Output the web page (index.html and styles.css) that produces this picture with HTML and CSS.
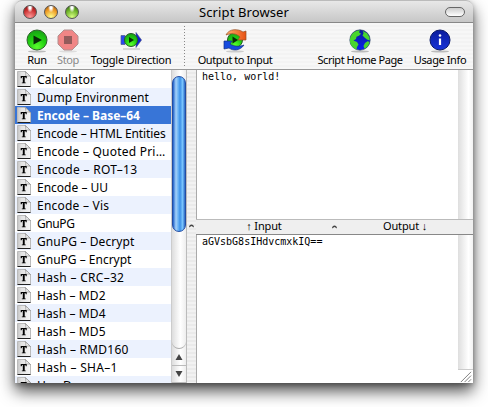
FILE: index.html
```html
<!DOCTYPE html>
<html lang="en">
<head>
<meta charset="utf-8">
<title>Script Browser</title>
<link rel="stylesheet" href="styles.css">
</head>
<body>
<svg class="defs" width="0" height="0">
  <defs>
    <linearGradient id="page" x1="0" y1="0" x2="1" y2="0"><stop offset="0" stop-color="#c4c4c4"/><stop offset=".3" stop-color="#e2e2e2"/><stop offset="1" stop-color="#f5f5f5"/></linearGradient>
    <radialGradient id="green" cx=".5" cy=".85" r=".8"><stop offset="0" stop-color="#5cff2e"/><stop offset=".55" stop-color="#20d010"/><stop offset="1" stop-color="#19a516"/></radialGradient>
    <linearGradient id="navy" x1="0" y1="0" x2="0" y2="1"><stop offset="0" stop-color="#0a1c9c"/><stop offset="1" stop-color="#1733d8"/></linearGradient>
    <linearGradient id="sea" x1="0" y1="0" x2="0" y2="1"><stop offset="0" stop-color="#0c1a9a"/><stop offset="1" stop-color="#0a22f0"/></linearGradient>
    <linearGradient id="orange" x1="0" y1="0" x2="1" y2="0"><stop offset="0" stop-color="#ffb070"/><stop offset="1" stop-color="#e85010"/></linearGradient>
    <symbol id="doc" viewBox="0 0 14 16">
      <path d="M.5.5h8l5 5v10H.5z" fill="url(#page)" stroke="#bbb"/>
      <path d="M8 .5c1.200 1.500 1 3.500.5 5 1.500-.8 3.500-.8 5 0z" fill="#fff" stroke="#888" stroke-width=".7"/>
      <path d="M.5 15.500h13" stroke="#222"/>
      <path d="M3.700 5h6v2.300h-.9L8.300 6h-.6v5.400l1 .2v.7H4.800v-.7l1-.2V6h-.6l-.6 1.300h-.9z" fill="#000"/>
    </symbol>
  </defs>
</svg>
<main class="window">
  <header class="titlebar">
    <div class="lights"><i class="light red"></i><i class="light amber"></i><i class="light lime"></i></div>
    <h1>Script Browser</h1>
    <i class="pill"></i>
  </header>
  <nav class="toolbar">
    <div class="tool run"><svg viewBox="0 0 24 24"><ellipse cx="12" cy="22.500" rx="9" ry="1" fill="#bbb"/><circle cx="12" cy="11" r="10" fill="url(#green)" stroke="#30622c"/><path d="M8.500 6.500l8.500 4.500-8.500 4.500z" fill="#092b08"/></svg><span>Run</span></div>
    <div class="tool stop"><svg viewBox="0 0 24 24"><ellipse cx="12" cy="22.500" rx="9" ry="1" fill="#ddd"/><path d="M8 1h8l6 6v8l-6 6H8l-6-6V7z" fill="#f08585" stroke="#b09090"/><path d="M8 7h8v8H8z" fill="#935b5b"/></svg><span>Stop</span></div>
    <div class="tool toggle"><svg viewBox="0 0 24 24"><path d="M4 20h17" stroke="#ccc" stroke-width="1.500"/><path d="M2 6.500h4v9H2z" fill="#2a48ee" stroke="#4e5a8c" stroke-width=".7"/><path d="M17 3.500l5.500 7.500-5.500 7.500z" fill="#1020d0" stroke="#4e5a8c" stroke-width=".7"/><circle cx="12" cy="11" r="6.500" fill="url(#green)" stroke="#285a28"/><path d="M10 8l5 3-5 3z" fill="#092b08"/></svg><span>Toggle Direction</span></div>
    <i class="rule"></i>
    <div class="tool output"><svg viewBox="0 0 24 24"><ellipse cx="12" cy="22.500" rx="9" ry="1" fill="#ccc"/><circle cx="12" cy="11" r="7.500" fill="url(#green)" stroke="#285a28"/><path d="M3 6C6-.5 15-.5 20 3l3-1v9h-8l2-3C13 4 8 4 3 6z" fill="url(#orange)" stroke="#975024" stroke-width=".7"/><path d="M21 16c-4 6-11 6-15 3l-5 1v-8h8l-2 3c4 2.500 9 3 14 1z" fill="#164bdf" stroke="#163080" stroke-width=".7"/><path d="M9.500 7.500l5.500 3.500-5.500 3.500z" fill="#092b08"/></svg><span>Output to Input</span></div>
    <div class="tool home"><svg viewBox="0 0 24 24"><ellipse cx="12" cy="22.500" rx="9" ry="1" fill="#bbb"/><circle cx="12" cy="11" r="10.200" fill="url(#sea)" stroke="#223a55" stroke-width=".6"/><path d="M2.200 9C3.500 4 8 1.200 12 1.300l-1 2 2 1.500-2 2-2.500 1L8 10l-2.500 1.500L9 13l1.500 2.500L9 18l-.5 2.500C3.500 18.500 1 14 2.200 9zM15 2l4 2.300 2.300 3.700.5 3.500-2.800-1-2.500-2-2-2 1-2zM17 14l3-2 1.500 1.500c-.8 3-2.500 5-5 6.200L15.500 17z" fill="#48d52e"/></svg><span>Script Home Page</span></div>
    <div class="tool usage"><svg viewBox="0 0 24 24"><ellipse cx="12" cy="22.500" rx="9" ry="1" fill="#bbb"/><circle cx="12" cy="11" r="10" fill="url(#navy)" stroke="#0a1968"/><circle cx="12" cy="6.500" r="1.300" fill="#fff"/><path d="M12 9.500v6.500" stroke="#fff" stroke-width="2.200"/></svg><span>Usage Info</span></div>
  </nav>
  <section class="content">
    <ul class="scripts">
      <li><svg><use href="#doc"/></svg><span class="loose">Calculator</span></li>
      <li><svg><use href="#doc"/></svg><span class="loose">Dump Environment</span></li>
      <li class="selected"><svg><use href="#doc"/></svg><span>Encode – Base–64</span></li>
      <li><svg><use href="#doc"/></svg><span class="tight">Encode – HTML Entities</span></li>
      <li><svg><use href="#doc"/></svg><span class="wide">Encode – Quoted Pri…</span></li>
      <li><svg><use href="#doc"/></svg><span class="wider">Encode – ROT–13</span></li>
      <li><svg><use href="#doc"/></svg><span>Encode – UU</span></li>
      <li><svg><use href="#doc"/></svg><span class="wide">Encode – Vis</span></li>
      <li><svg><use href="#doc"/></svg><span class="tighter">GnuPG</span></li>
      <li><svg><use href="#doc"/></svg><span class="loose">GnuPG – Decrypt</span></li>
      <li><svg><use href="#doc"/></svg><span>GnuPG – Encrypt</span></li>
      <li><svg><use href="#doc"/></svg><span class="wider">Hash – CRC–32</span></li>
      <li><svg><use href="#doc"/></svg><span class="loose">Hash – MD2</span></li>
      <li><svg><use href="#doc"/></svg><span class="loose">Hash – MD4</span></li>
      <li><svg><use href="#doc"/></svg><span class="loose">Hash – MD5</span></li>
      <li><svg><use href="#doc"/></svg><span class="wide">Hash – RMD160</span></li>
      <li><svg><use href="#doc"/></svg><span class="wider">Hash – SHA–1</span></li>
      <li><svg><use href="#doc"/></svg><span class="wider">Hex Dump</span></li>
    </ul>
    <div class="scrollbar">
      <div class="track"><div class="thumb"></div></div>
      <div class="step"><svg viewBox="0 0 8 6"><path d="M4 0l3.500 6h-7z"/></svg></div>
      <div class="step"><svg viewBox="0 0 8 6"><path d="M4 6L.5 0h7z"/></svg></div>
    </div>
    <div class="splitter"><svg viewBox="0 0 5 4"><path d="M0 3.500C0-.5 5-.5 5 3.500L2.500 2z"/></svg></div>
    <div class="panes">
      <div class="pane"><pre>hello, world!</pre><i class="gutter"></i></div>
      <div class="divider"><span>↑ Input</span><svg viewBox="0 0 5 4"><path d="M0 3.500C0-.5 5-.5 5 3.500L2.500 2z"/></svg><span>Output ↓</span></div>
      <div class="pane"><pre>aGVsbG8sIHdvcmxkIQ==</pre><i class="gutter last"><svg class="grip" viewBox="0 0 14 14"><path d="M2 13L13 2M6 13l7-7M10 13l3-3" stroke="#777" fill="none"/></svg></i></div>
    </div>
  </section>
</main>
</body>
</html>
```

FILE: styles.css
```css
* { box-sizing: border-box; }
body { margin: 0; height: 407px; overflow: hidden; background: #fff; font-family: "Noto Sans", sans-serif; color: #000; }
.defs { display: block; height: 0; }
svg { display: block; flex: none; }
.window { width: 458px; height: 383px; margin-left: 15px; display: flex; flex-direction: column; border-radius: 7px 7px 0 0; box-shadow: 0 8px 16px rgba(0,0,0,.7), 0 2px 5px rgba(0,0,0,.25); }
.titlebar { height: 23px; display: grid; grid-template-columns: 110px 1fr 110px; align-items: center; border-radius: 7px 7px 0 0; border-top: 1px solid #bbb; border-bottom: 1px solid #888; background: linear-gradient(#e8e8e8, #c7c7c7); }
.titlebar h1 { margin: 0; text-align: center; font-size: 13px; font-weight: 400; line-height: 20px; letter-spacing: .1px; white-space: nowrap; }
.lights { display: flex; gap: 7px; padding-left: 8px; }
.light { width: 14px; height: 14px; border-radius: 50%; border: 1px solid #555; }
.red { background: radial-gradient(ellipse at 50% 10%, #fff 0 12%, transparent 35%), radial-gradient(circle at 50% 90%, #ff9898, #c82e2e 60%, #7c1111); }
.amber { background: radial-gradient(ellipse at 50% 10%, #fff 0 12%, transparent 35%), radial-gradient(circle at 50% 90%, #ffff8c, #ec9722 60%, #8c4809); }
.lime { background: radial-gradient(ellipse at 50% 10%, #fff 0 12%, transparent 35%), radial-gradient(circle at 50% 90%, #d7ff82, #68ad24 60%, #2b5c12); }
.pill { width: 20px; height: 10px; justify-self: end; margin-right: 8px; border: 1.5px solid #666; border-radius: 5px; background: linear-gradient(#ccc, #fff); }
.toolbar { height: 47px; display: grid; grid-template-columns: 7px 30px 1px 30px 3px 90px 8px 1px 7px 86px 1fr 92px 4px 60px 3px; border-bottom: 1px solid #999; background: repeating-linear-gradient(#f7f7f7 0 2px, #f3f3f3 2px 4px); }
.tool { display: flex; flex-direction: column; align-items: center; padding-top: 6px; font-size: 11px; line-height: 14px; white-space: nowrap; }
.tool svg { width: 24px; height: 24px; }
.run { grid-column: 2; letter-spacing: -.3px; }
.stop { grid-column: 4; color: #888; letter-spacing: -.4px; }
.toggle { grid-column: 6; letter-spacing: -.25px; }
.rule { grid-column: 8; margin: 3px 0; background: repeating-linear-gradient(#888 0 1px, transparent 1px 3px); }
.output { grid-column: 10; letter-spacing: -.45px; }
.home { grid-column: 12; letter-spacing: -.45px; }
.usage { grid-column: 14; letter-spacing: -.4px; }
.content { flex: 1; min-height: 0; display: flex; }
.scripts { width: 156px; height: 313px; margin: 0; padding: 0; overflow: hidden; list-style: none; background: #fff; }
.scripts li { height: 18px; display: flex; align-items: center; gap: 6px; padding-left: 2px; font-size: 12px; line-height: 18px; white-space: nowrap; }
.scripts span { padding-top: 2px; }
.scripts li:nth-child(even) { background: #ecf2fe; }
.scripts .selected { background: #3875d7; color: #fff; font-weight: 700; }
.scripts .selected span { letter-spacing: -.02px; }
.tighter { letter-spacing: -.4px; }
.tight { letter-spacing: -.1px; }
.loose { letter-spacing: .11px; }
.wide { letter-spacing: .22px; }
.wider { letter-spacing: .3px; }
.scripts svg { width: 14px; height: 16px; }
.scrollbar { width: 16px; display: flex; flex-direction: column; border-left: 1px solid #ccc; border-right: 1px solid #bbb; background: linear-gradient(90deg, #ddd, #fff 60%, #eee); }
.track { flex: 1; padding-top: 6px; border-bottom: 1px solid #aaa; border-radius: 0 0 7px 7px; }
.thumb { height: 156px; border: 1px solid #234da4; border-radius: 7px; background: linear-gradient(90deg, #1d5fc9, #a5d2fa 25%, #5aa9f2 48%, #3b8fe8 58%, #7ac5fd 80%, #2866c3); }
.step { height: 17px; display: flex; align-items: center; justify-content: center; border-bottom: 1px solid #bbb; }
.step svg { width: 8px; height: 6px; fill: #444; }
.splitter { width: 9px; display: flex; justify-content: center; padding-top: 154px; background: repeating-linear-gradient(#f2f2f2 0 2px, #eaeaea 2px 4px); }
.splitter svg, .divider svg { width: 5px; height: 4px; fill: #444; }
.panes { flex: 1; display: grid; grid-template-rows: 149px 16px 148px; }
.pane { display: flex; background: #fff; border-left: 1px solid #aaa; }
.pane pre { flex: 1; margin: 0; padding: 0 0 0 5px; font: 10px/13px "DejaVu Sans Mono", monospace; }
.gutter { width: 15px; display: flex; align-items: flex-end; background: linear-gradient(90deg, #dedede, #fff 70%, #f2f2f2); }
.grip { width: 15px; height: 14px; background: #fff; border-top: 1px solid #ccc; }
.divider { display: grid; grid-template-columns: 136px 5px 136px; align-items: center; border-top: 1px solid #bbb; border-bottom: 1px solid #888; background: #efefef; text-align: center; font-size: 11px; line-height: 14px; letter-spacing: -.15px; }
.divider span { position: relative; top: -1px; }
```
